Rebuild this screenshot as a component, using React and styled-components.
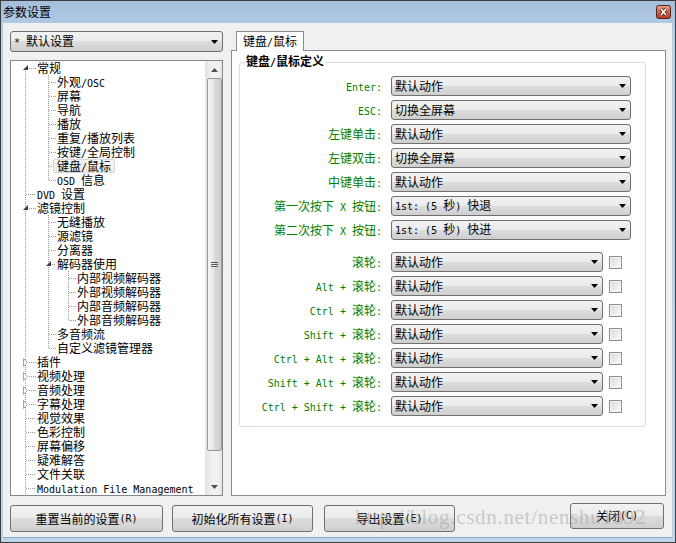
import React from "react"
import styled, { createGlobalStyle } from "styled-components"

const GlobalStyle = createGlobalStyle`
  html, body {
    margin: 0;
    padding: 0;
    background: #fff;
  }
  body {
    font-family: "Noto Sans CJK SC", "Noto Sans", sans-serif;
    font-size: 12px;
    color: #000;
  }
  * {
    box-sizing: border-box;
  }
`

const Lat = styled.span`
  font-family: "DejaVu Sans Mono", "Liberation Mono", monospace;
  font-size: 10px;
`

// latin runs are drawn monospaced like the original SimSun half-width glyphs
const Txt = ({ children }) =>
  String(children)
    .split(/([\x20-\x7e]+)/)
    .map((p, i) => (i % 2 ? <Lat key={i}>{p}</Lat> : p))

const Window = styled.div`
  position: relative;
  width: 676px;
  height: 543px;
  border: 1px solid #3c3c3c;
  background: linear-gradient(#a4bfdc, #b9d0e9 40px, #bcd3eb);
  display: flex;
  flex-direction: column;
`

const TitleBar = styled.div`
  height: 22px;
  flex: none;
  display: flex;
  align-items: center;
  justify-content: space-between;
  padding: 0 4px 0 2px;
  line-height: 14px;
`

const Client = styled.div`
  flex: 1;
  margin: 0 3px 5px 2px;
  background: #f0f0f0;
  padding: 8px 6px 0 7px;
  display: flex;
  flex-direction: column;
  box-shadow: 0 1px 0 #8ea7c3;
`

const MainRow = styled.div`
  display: flex;
  gap: 8px;
  height: 465px;
`

const LeftCol = styled.div`
  width: 213px;
  display: flex;
  flex-direction: column;
  gap: 8px;
`

const RightCol = styled.div`
  width: 435px;
  display: flex;
  flex-direction: column;
`

const Combo = styled.div`
  width: ${p => p.$w}px;
  height: ${p => p.$h || 20}px;
  flex: none;
  border: 1px solid #707070;
  border-radius: 3px;
  background: linear-gradient(#f2f2f2, #ebebeb 50%, #dddddd 50%, #cfcfcf);
  display: flex;
  align-items: center;
  justify-content: space-between;
  padding: 0 4px 0 3px;
  line-height: 14px;
  white-space: pre;
`

const Arrow = () => (
  <svg width="7" height="4" viewBox="0 0 7 4">
    <polygon points="0,0 7,0 3.5,4" fill="#000" />
  </svg>
)

const TreeBox = styled.div`
  height: 436px;
  border: 1px solid #828790;
  background: #fff;
  display: flex;
`

const TreeList = styled.div`
  flex: 1;
  overflow: hidden;
`

const TreeRow = styled.div`
  height: 14px;
  display: flex;
  align-items: center;
  white-space: pre;
`

const TreeLabel = styled.span`
  margin-left: -4px;
  padding: 0 3px;
  height: 14px;
  line-height: 12px;
  border: 1px solid ${p => (p.$sel ? "#d9d9d9" : "transparent")};
  border-radius: 2px;
  background: ${p => (p.$sel ? "linear-gradient(#f8f8f8, #e9e9e9)" : "none")};
`

const ScrollBar = styled.div`
  width: 17px;
  flex: none;
  display: flex;
  flex-direction: column;
  background: linear-gradient(90deg, #e3e3e3, #f0f0f0 30%, #f2f2f2 70%, #e6e6e6);
  border-left: 1px solid #e4e4e4;
`

const ScrollBtn = styled.div`
  height: 17px;
  flex: none;
  display: flex;
  align-items: center;
  justify-content: center;
`

const Thumb = styled.div`
  height: 373px;
  flex: none;
  margin: 0 0 0 1px;
  border: 1px solid #979797;
  border-radius: 2px;
  background: linear-gradient(90deg, #f4f4f4, #e8e8e8 45%, #d6d6d6 55%, #cfcfcf);
  display: flex;
  align-items: center;
  justify-content: center;
`

const Track = styled.div`
  flex: 1;
`

const TabStrip = styled.div`
  height: 19px;
  flex: none;
  padding-left: 5px;
  display: flex;
  align-items: flex-start;
`

const Tab = styled.div`
  position: relative;
  z-index: 1;
  height: 20px;
  padding: 0 6px;
  border: 1px solid #898c95;
  border-bottom: none;
  background: #fff;
  line-height: 18px;
  white-space: pre;
`

const Panel = styled.div`
  height: 446px;
  border: 1px solid #898c95;
  background: #fff;
  padding: 3px 19px 0 7px;
`

const Group = styled.fieldset`
  margin: 0;
  padding: 6px 0 10px 0;
  border: 1px solid #d5dfe5;
  border-radius: 3px;
  min-width: 0;
`

const Legend = styled.legend`
  margin-left: 5px;
  padding: 0 1px;
  font-weight: bold;
  line-height: 14px;
  white-space: pre;
`

const Rows = styled.div`
  display: grid;
  grid-template-columns: 142px 240px;
  column-gap: 9px;
  row-gap: 4px;
  grid-auto-rows: 20px;
  margin-top: ${p => p.$mt || 0}px;
`

const KeyLabel = styled.div`
  color: #008000;
  text-align: right;
  line-height: 20px;
  white-space: pre;
`

const WheelCell = styled.div`
  display: flex;
  align-items: center;
  gap: 6px;
`

const Check = styled.span`
  width: 13px;
  height: 13px;
  border: 1px solid #8e8f8f;
  background: linear-gradient(135deg, #d8d8d8, #f6f6f6 80%);
  box-shadow: inset 0 0 0 1px #f4f4f4;
`

const ButtonRow = styled.div`
  display: flex;
  align-items: flex-start;
  margin-top: 9px;
`

const Button = styled.div`
  width: ${p => p.$w}px;
  height: ${p => p.$h || 27}px;
  margin: ${p => p.$m || "0"};
  border: 1px solid #707070;
  border-radius: 3px;
  background: linear-gradient(#f2f2f2, #ebebeb 50%, #dddddd 50%, #cfcfcf);
  display: flex;
  align-items: center;
  justify-content: center;
  line-height: 14px;
  white-space: pre;
`

const Watermark = styled.div`
  position: absolute;
  left: 354px;
  top: 504px;
  font-family: "Liberation Serif", serif;
  font-size: 21px;
  letter-spacing: 0.7px;
  color: rgba(160, 160, 160, 0.5);
  white-space: pre;
  pointer-events: none;
`

const tree = [
  ["常规", 0, "open"],
  ["外观/OSC", 1],
  ["屏幕", 1],
  ["导航", 1],
  ["播放", 1],
  ["重复/播放列表", 1],
  ["按键/全局控制", 1],
  ["键盘/鼠标", 1, null, true],
  ["OSD 信息", 1],
  ["DVD 设置", 0],
  ["滤镜控制", 0, "open"],
  ["无缝播放", 1],
  ["源滤镜", 1],
  ["分离器", 1],
  ["解码器使用", 1, "open"],
  ["内部视频解码器", 2],
  ["外部视频解码器", 2],
  ["内部音频解码器", 2],
  ["外部音频解码器", 2],
  ["多音频流", 1],
  ["自定义滤镜管理器", 1],
  ["插件", 0, "closed"],
  ["视频处理", 0, "closed"],
  ["音频处理", 0, "closed"],
  ["字幕处理", 0, "closed"],
  ["视觉效果", 0],
  ["色彩控制", 0],
  ["屏幕偏移", 0],
  ["疑难解答", 0],
  ["文件关联", 0],
  ["Modulation File Management", 0],
]

const GX = [14, 37, 57]
const TS = [26, 46, 66]

// does the branch at level a still run below row i
const continues = (i, a) => {
  if (a === 0) return true
  for (let j = i + 1; j < tree.length; j++) {
    if (tree[j][1] <= a) return tree[j][1] === a
  }
  return false
}

const Dots = ({ x1, y1, x2, y2 }) => (
  <line
    x1={x1}
    y1={y1}
    x2={x2}
    y2={y2}
    stroke="#9a9a9a"
    strokeDasharray="1 1"
    shapeRendering="crispEdges"
  />
)

const Guides = ({ i }) => {
  const [, l, exp] = tree[i]
  const w = TS[l]
  const g = GX[l] + 0.5
  const lines = []
  for (let a = 0; a < l; a++) {
    if (continues(i, a)) lines.push(<Dots key={a} x1={GX[a] + 0.5} y1={0} x2={GX[a] + 0.5} y2={14} />)
  }
  const top = i === 0 ? 10 : 0
  const bottom = continues(i, l) ? 14 : 8
  lines.push(<Dots key="v" x1={g} y1={top} x2={g} y2={bottom} />)
  lines.push(<Dots key="h" x1={GX[l] + (exp ? 4 : 1)} y1={7.5} x2={TS[l] - 1} y2={7.5} />)
  return (
    <svg width={w} height="14" style={{ flex: "none" }}>
      {lines}
      {exp === "open" && (
        <polygon
          points={`${GX[l] + 3},${4} ${GX[l] + 3},${9} ${GX[l] - 2},${9}`}
          fill="#3c3c3c"
        />
      )}
      {exp === "closed" && (
        <polygon
          points={`${GX[l] - 1.5},${3.5} ${GX[l] - 1.5},${11.5} ${GX[l] + 2.5},${7.5}`}
          fill="#fff"
          stroke="#a6a6a6"
        />
      )}
    </svg>
  )
}

const keyRows = [
  ["Enter:", "默认动作"],
  ["ESC:", "切换全屏幕"],
  ["左键单击:", "默认动作"],
  ["左键双击:", "切换全屏幕"],
  ["中键单击:", "默认动作"],
  ["第一次按下 X 按钮:", "1st: (5 秒) 快退"],
  ["第二次按下 X 按钮:", "1st: (5 秒) 快进"],
]

const wheelRows = [
  "滚轮:",
  "Alt + 滚轮:",
  "Ctrl + 滚轮:",
  "Shift + 滚轮:",
  "Ctrl + Alt + 滚轮:",
  "Shift + Alt + 滚轮:",
  "Ctrl + Shift + 滚轮:",
]

const CloseIcon = () => (
  <svg width="15" height="14" viewBox="0 0 15 14">
    <defs>
      <linearGradient id="closeGrad" x1="0" y1="0" x2="0" y2="1">
        <stop offset="0" stopColor="#e6a595" />
        <stop offset="0.45" stopColor="#cf654c" />
        <stop offset="1" stopColor="#b83a22" />
      </linearGradient>
    </defs>
    <rect x="0.5" y="0.5" width="14" height="13" rx="2" fill="url(#closeGrad)" stroke="#52231b" />
    <path d="M5 4 L10 10 M10 4 L5 10" stroke="#4a1c14" strokeWidth="3.2" />
    <path d="M5 4 L10 10 M10 4 L5 10" stroke="#fff" strokeWidth="1.6" />
  </svg>
)

const Grip = () => (
  <svg width="7" height="7" viewBox="0 0 7 7">
    <path d="M0 1.5h7M0 3.5h7M0 5.5h7" stroke="#5a5a5a" shapeRendering="crispEdges" />
  </svg>
)

const SmallArrow = ({ up }) => (
  <svg width="7" height="4" viewBox="0 0 7 4">
    <polygon points={up ? "0,4 7,4 3.5,0" : "0,0 7,0 3.5,4"} fill="#505050" />
  </svg>
)

export default function App() {
  return (
    <>
      <GlobalStyle />
      <Window>
        <TitleBar>
          <span>参数设置</span>
          <CloseIcon />
        </TitleBar>
        <Client>
          <MainRow>
            <LeftCol>
              <Combo $w={213} $h={21}>
                <span>
                  <Txt>* 默认设置</Txt>
                </span>
                <Arrow />
              </Combo>
              <TreeBox>
                <TreeList>
                  {tree.map((row, i) => (
                    <TreeRow key={i}>
                      <Guides i={i} />
                      <TreeLabel $sel={row[3]}>
                        <Txt>{row[0]}</Txt>
                      </TreeLabel>
                    </TreeRow>
                  ))}
                </TreeList>
                <ScrollBar>
                  <ScrollBtn>
                    <SmallArrow up />
                  </ScrollBtn>
                  <Thumb>
                    <Grip />
                  </Thumb>
                  <Track />
                  <ScrollBtn>
                    <SmallArrow />
                  </ScrollBtn>
                </ScrollBar>
              </TreeBox>
            </LeftCol>
            <RightCol>
              <TabStrip>
                <Tab>
                  <Txt>键盘/鼠标</Txt>
                </Tab>
              </TabStrip>
              <Panel>
                <Group>
                  <Legend>
                    <Txt>键盘/鼠标定义</Txt>
                  </Legend>
                  <Rows>
                    {keyRows.map(([label, value]) => (
                      <React.Fragment key={label}>
                        <KeyLabel>
                          <Txt>{label}</Txt>
                        </KeyLabel>
                        <Combo $w={240}>
                          <span>
                            <Txt>{value}</Txt>
                          </span>
                          <Arrow />
                        </Combo>
                      </React.Fragment>
                    ))}
                  </Rows>
                  <Rows $mt={12}>
                    {wheelRows.map(label => (
                      <React.Fragment key={label}>
                        <KeyLabel>
                          <Txt>{label}</Txt>
                        </KeyLabel>
                        <WheelCell>
                          <Combo $w={212}>
                            <span>默认动作</span>
                            <Arrow />
                          </Combo>
                          <Check />
                        </WheelCell>
                      </React.Fragment>
                    ))}
                  </Rows>
                </Group>
              </Panel>
            </RightCol>
          </MainRow>
          <ButtonRow>
            <Button $w={153}>
              <Txt>重置当前的设置(R)</Txt>
            </Button>
            <Button $w={141} $m="0 0 0 9px">
              <Txt>初始化所有设置(I)</Txt>
            </Button>
            <Button $w={131} $m="0 0 0 11px">
              <Txt>导出设置(E)</Txt>
            </Button>
            <Button $w={94} $h={26} $m="-2px 2px 0 auto">
              <Txt>关闭(C)</Txt>
            </Button>
          </ButtonRow>
        </Client>
        <Watermark>http://blog.csdn.net/nenshu1892</Watermark>
      </Window>
    </>
  )
}
